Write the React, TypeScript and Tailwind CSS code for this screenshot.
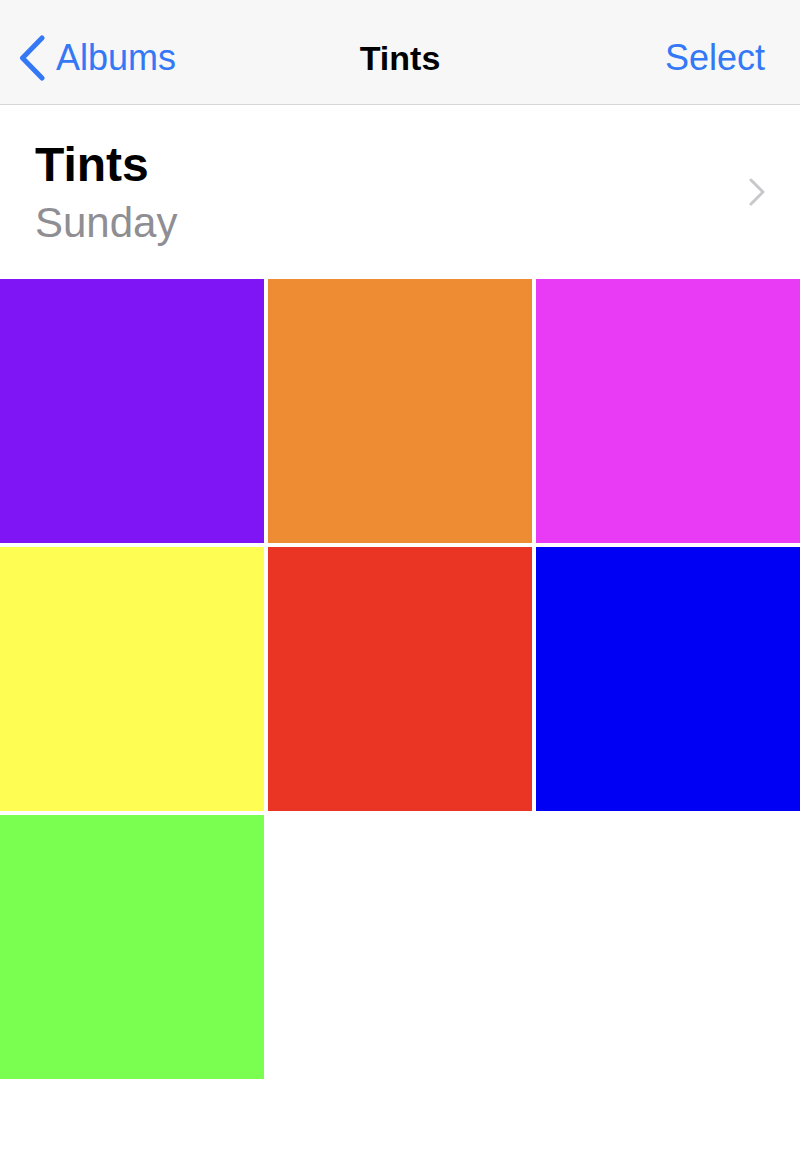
const tiles = [
  "bg-[#7f14f5]",
  "bg-[#ee8c33]",
  "bg-[#e93af5]",
  "bg-[#fefd54]",
  "bg-[#ea3424]",
  "bg-[#0000f5]",
  "bg-[#7afe4f]",
];

export default function App() {
  return (
    <div className="min-h-[1151px] w-[800px] bg-white font-['Liberation_Sans',Arial,sans-serif]">
      {/* nav bar */}
      <div className="relative flex h-[105px] items-center justify-between border-b border-[#d6d6d8] bg-[#f7f7f7] pl-[19px] pr-[35px] pt-[12px]">
        <div className="flex items-center gap-[11px] text-[#3478f6]">
          <svg width="26" height="46" viewBox="0 0 26 46" fill="none">
            <path
              d="M23 3 L3.5 23 L23 43"
              stroke="currentColor"
              strokeWidth="5"
              strokeLinecap="round"
              strokeLinejoin="round"
            />
          </svg>
          <span className="text-[36px] leading-none">Albums</span>
        </div>
        <span className="absolute left-1/2 top-[41px] -translate-x-1/2 text-[34px] font-bold leading-none text-black">
          Tints
        </span>
        <span className="text-[36px] leading-none text-[#3478f6]">Select</span>
      </div>

      {/* album header */}
      <div className="flex h-[174px] items-center justify-between pl-[35px] pr-[34px]">
        <div className="flex flex-col gap-[13px]">
          <span className="text-[48px] font-bold leading-none text-black">Tints</span>
          <span className="text-[42px] leading-none text-[#8e8e93]">Sunday</span>
        </div>
        <svg width="18" height="28" viewBox="0 0 18 28" fill="none">
          <path
            d="M3 2 L15 14 L3 26"
            stroke="#c7c7cc"
            strokeWidth="3"
            strokeLinecap="round"
            strokeLinejoin="round"
          />
        </svg>
      </div>

      {/* photos */}
      <div className="grid grid-cols-3 gap-[4px]">
        {tiles.map((c, i) => (
          <div key={i} className={`h-[264px] ${c}`} />
        ))}
      </div>
    </div>
  );
}
